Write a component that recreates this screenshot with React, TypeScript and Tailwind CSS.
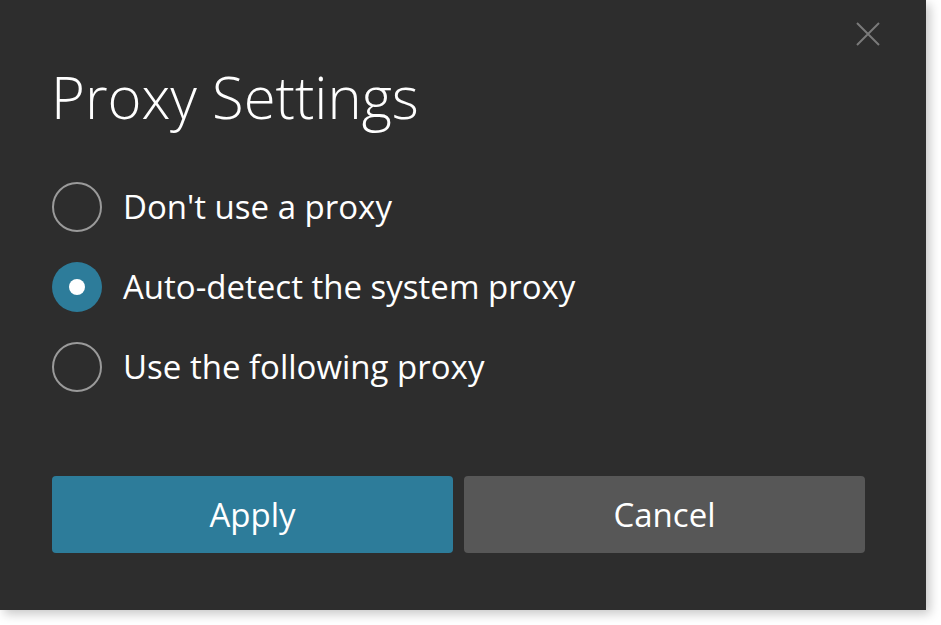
export default function App() {
  const options = [
    { label: "Don't use a proxy", checked: false },
    { label: "Auto-detect the system proxy", checked: true },
    { label: "Use the following proxy", checked: false },
  ];

  return (
    <div className="w-[941px] h-[625px] bg-white" style={{ fontFamily: "'Open Sans', sans-serif" }}>
      <div className="relative w-[926px] h-[610px] bg-[#2d2d2d] shadow-[4px_4px_10px_rgba(0,0,0,0.22)] flex flex-col px-[52px] pt-[62px]">
        <button className="absolute right-[46px] top-[22px] w-[24px] h-[24px] text-[#7a7a7a]">
          <svg viewBox="0 0 24 24" className="w-full h-full" fill="none" stroke="currentColor" strokeWidth="2">
            <path d="M1 1L23 23M23 1L1 23" />
          </svg>
        </button>

        <h1 className="text-[58px] font-light text-white leading-[70px] -ml-[1px]">Proxy Settings</h1>

        <div className="flex flex-col mt-[50px] gap-[30px]">
          {options.map((o) => (
            <label key={o.label} className="flex items-center gap-[21px] h-[50px]">
              {o.checked ? (
                <span className="w-[50px] h-[50px] rounded-full bg-[#2d7c9a] flex items-center justify-center">
                  <span className="w-[16px] h-[16px] rounded-full bg-white" />
                </span>
              ) : (
                <span className="w-[50px] h-[50px] rounded-full border-2 border-[#9a9a9a]" />
              )}
              <span className="text-[33px] text-white">{o.label}</span>
            </label>
          ))}
        </div>

        <div className="flex gap-[11px] mt-[84px] w-[813px]">
          <button className="flex-1 h-[77px] rounded-[4px] bg-[#2d7c9a] text-white text-[33px]">Apply</button>
          <button className="flex-1 h-[77px] rounded-[4px] bg-[#575757] text-white text-[33px]">Cancel</button>
        </div>
      </div>
    </div>
  );
}
